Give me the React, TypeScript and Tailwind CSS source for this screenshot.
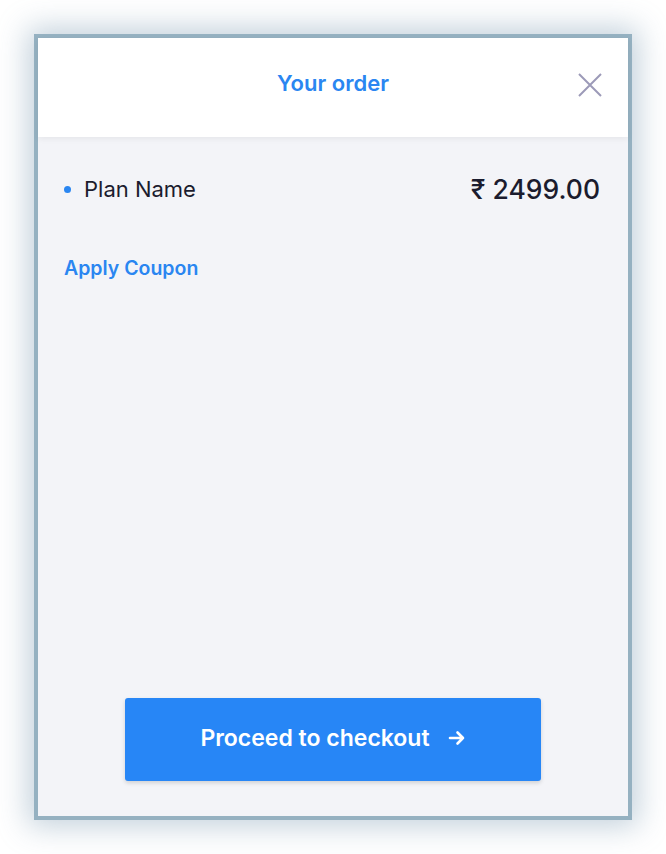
import React from "react";

const OrderSummary: React.FC = () => {
  return (
    <div className="min-h-[854px] bg-white pt-[34px] pl-[34px] font-['Inter','Noto_Sans',sans-serif]">
      <div className="flex h-[786px] w-[598px] flex-col border-4 border-[#95b1c1] bg-[#f3f4f8] shadow-[0_0_28px_6px_rgba(120,150,175,0.45)]">
        {/* header */}
        <div className="relative z-10 flex h-[99px] items-center justify-center bg-white pb-[8px] shadow-[0_2px_6px_rgba(0,0,0,0.06)]">
          <h1 className="text-[22px] font-semibold text-[#2a86f1]">Your order</h1>
          <button className="absolute right-[26px] top-[35px] text-[#9c9ab8]">
            <svg width="24" height="24" viewBox="0 0 24 24" fill="none" stroke="currentColor" strokeWidth="2">
              <path d="M1 1L23 23M23 1L1 23" />
            </svg>
          </button>
        </div>

        {/* body */}
        <div className="flex flex-1 flex-col px-[26px]">
          <div className="mt-[33px] flex items-center justify-between">
            <div className="flex items-center gap-[13px]">
              <span className="h-[7px] w-[7px] rounded-full bg-[#2a86f1]" />
              <span className="text-[22px] text-[#1b1c2e]">Plan Name</span>
            </div>
            <span className="mr-[2px] text-[26.5px] font-medium text-[#1b1c2e]">₹ 2499.00</span>
          </div>
          <button className="mt-[44px] self-start text-[19.5px] font-semibold text-[#2a86f1]">
            Apply Coupon
          </button>

          <div className="mt-auto mb-[35px] flex justify-center">
            <button className="flex h-[83px] w-[416px] items-center justify-center gap-[18px] rounded-[3px] bg-[#2786f6] pb-[3px] text-[23px] font-semibold text-white shadow-[0_2px_4px_rgba(0,0,0,0.15)]">
              Proceed to checkout
              <svg width="18" height="18" viewBox="0 0 18 18" fill="none" stroke="currentColor" strokeWidth="2.6" strokeLinecap="round" strokeLinejoin="round">
                <path d="M2 9H15M9.5 3.5L15 9L9.5 14.5" />
              </svg>
            </button>
          </div>
        </div>
      </div>
    </div>
  );
};

export default function App() {
  return <OrderSummary />;
}
